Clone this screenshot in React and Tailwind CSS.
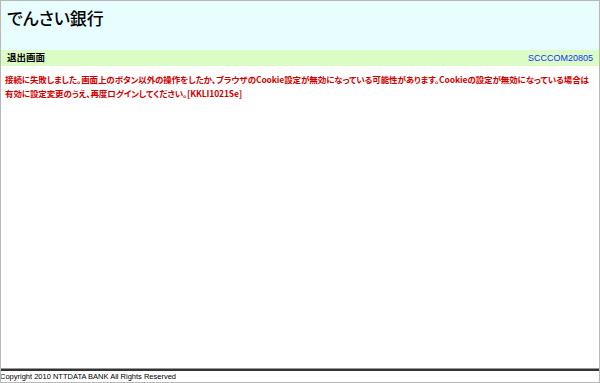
import React from "react";

const App = () => {
  return (
    <div className="w-[600px] h-[383px] bg-white border border-[#b8b8b8] flex flex-col font-['Noto_Sans_CJK_JP',sans-serif] [font-feature-settings:'palt'] overflow-hidden">
      <div className="h-[49px] bg-[#e8fdfe] px-[6px] pt-[6px]">
        <h1 className="text-[17px] leading-[22px] font-medium text-black">でんさい銀行</h1>
      </div>
      <div className="h-[16px] bg-[#dbfcc4] flex items-center justify-between px-[6px]">
        <span className="text-[9.5px] font-bold text-black leading-none">退出画面</span>
        <span className="text-[9px] text-[#1030ff] leading-none font-['Liberation_Sans',sans-serif]">SCCCOM20805</span>
      </div>
      <div className="flex-1 px-[4px] pt-[6px]">
        <p className="text-[8.5px] leading-[14px] font-bold text-[#d00000] tracking-[-0.1px]">
          接続に失敗しました。画面上のボタン以外の操作をしたか、ブラウザのCookie設定が無効になっている可能性があります。Cookieの設定が無効になっている場合は有効に設定変更のうえ、再度ログインしてください。[KKLI1021Se]
        </p>
      </div>
      <div className="border-t border-[#999] border-b-2 border-b-[#333] h-[3px]"></div>
      <div className="h-[11px] flex items-center -ml-[1px]">
        <span className="text-[7.5px] leading-none text-black font-['Liberation_Sans',sans-serif]">Copyright 2010 NTTDATA BANK All Rights Reserved</span>
      </div>
    </div>
  );
};

export default App;
